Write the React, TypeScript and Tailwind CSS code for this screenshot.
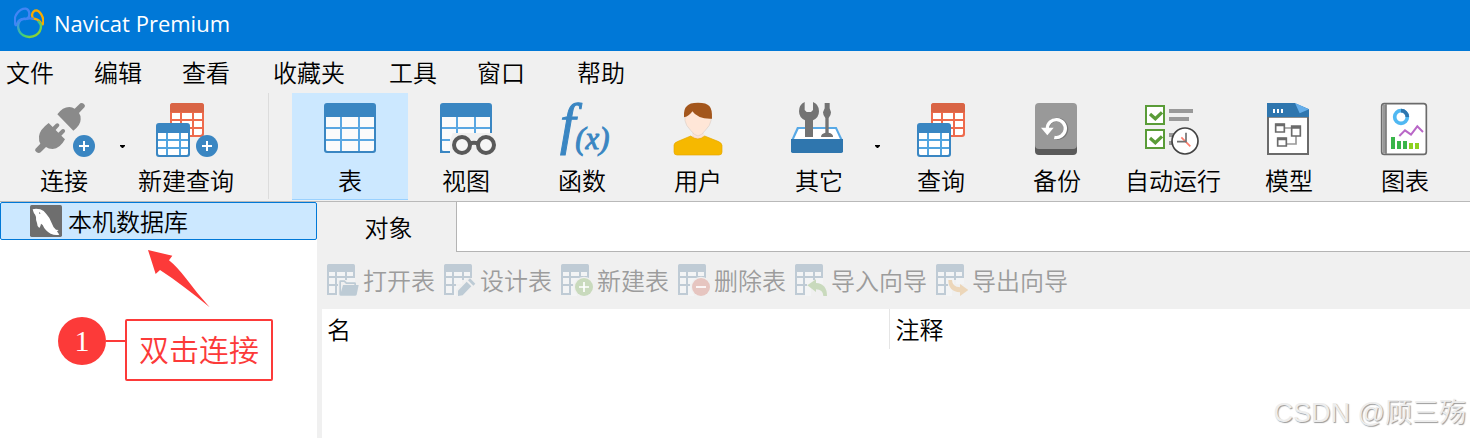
import React from 'react'

const Plus: React.FC<{ x: number; y: number }> = ({ x, y }) => (
  <g>
    <circle cx={x} cy={y} r="33" fill="#3a86c2" />
    <path d={`M${x - 15} ${y}h30M${x} ${y - 15}v30`} stroke="#fff" strokeWidth="6" />
  </g>
)

const TwoTables: React.FC = () => (
  <g>
    <rect x="510" y="39" width="102" height="102" rx="9" fill="#ee6b4d" />
    <path d="M510 67V48q0-9 9-9h84q9 0 9 9v19z" fill="#d96445" />
    <path
      d="M516 69h24v18h-24zM546 69h30v18h-30zM582 69h24v18h-24zM516 93h24v18h-24zM546 93h30v18h-30zM582 93h24v18h-24zM546 117h30v18h-30zM582 117h24v13q0 5-5 5h-19z"
      fill="#fff"
    />
    <rect x="468" y="99" width="102" height="102" rx="9" fill="#3a86c2" />
    <path d="M474 129h90v66h-90z" fill="#52a5e0" />
    <path
      d="M474 129h24v18h-24zM504 129h33v18h-33zM543 129h21v18h-21zM474 153h24v18h-24zM504 153h33v18h-33zM543 153h21v18h-21zM474 177h24v18h-19q-5 0-5-5zM504 177h33v18h-33zM543 177h21v13q0 5-5 5h-16z"
      fill="#fff"
    />
  </g>
)

const connectIcon = (
  <g>
    <g fill="#8a8a8a">
      <path d="M172 73Q188 51 208 51Q217 51 224 56L241 40Q246 37 251 41Q257 45 254 51L237 69Q243 77 242 88Q242 106 220 122z" />
      <path d="M146 99L158 111L168 101Q172 98 176 101Q180 105 177 109L167 120L175 128L186 118Q191 116 194 119Q197 123 194 127L184 137L195 148Q180 176 158 177Q145 177 138 171L122 187Q117 191 110 187Q103 183 106 177L121 161Q116 154 117 139Q119 119 146 99z" />
    </g>
    <circle cx="252" cy="168" r="38" fill="#f0f0f0" />
    <Plus x={252} y={168} />
  </g>
)

const newQueryIcon = (
  <g>
    <TwoTables />
    <Plus x={621} y={168} />
  </g>
)

const tableIcon = (
  <g>
    <rect x="162" y="39" width="156" height="150" rx="9" fill="#3a86c2" />
    <path d="M168 81h144v102h-144z" fill="#5aa7e2" />
    <path
      d="M168 81h42v30h-42zM216 81h48v30h-48zM270 81h42v30h-42zM168 117h42v30h-42zM216 117h48v30h-48zM270 117h42v30h-42zM168 153h42v30h-37q-5 0-5-5zM216 153h48v30h-48zM270 153h42v25q0 5-5 5h-37z"
      fill="#fbfbfb"
    />
  </g>
)

const viewIcon = (
  <g>
    <path d="M510 189V48q0-9 9-9h138q9 0 9 9v81H540v60z" fill="#3a86c2" />
    <path d="M516 81h144v48H540v54h-24z" fill="#5aa7e2" />
    <path
      d="M516 81h42v30h-42zM564 81h48v30h-48zM618 81h42v30h-42zM516 117h42v30h-42zM564 117h48v20h-48zM618 117h42v20h-42zM516 153h30v30h-25q-5 0-5-5z"
      fill="#fbfbfb"
    />
    <path d="M540 189v-36l8-24h118v60z" fill="#f0f0f0" />
    <g fill="#f6f6f6" stroke="#595959" strokeWidth="12">
      <circle cx="576" cy="165" r="24" />
      <circle cx="648" cy="165" r="24" />
      <path d="M599 160q13-4 26 0" />
    </g>
  </g>
)

const functionIcon = (
  <g
    fill="#3a86c2"
    stroke="#3a86c2"
    strokeWidth="3"
    className="font-['Liberation_Serif',serif] italic"
  >
    <text x="60" y="159" fontSize="168">f</text>
    <text x="106" y="177" fontSize="92">(x)</text>
  </g>
)

const userIcon = (
  <g>
    <path d="M458 128h32v14l-16 14-16-14z" fill="#f8d5c2" />
    <path
      d="M402 165Q403 158 414 154L452 138Q474 156 494 138L534 154Q545 158 546 166V186Q546 195 537 195H411Q402 195 402 186z"
      fill="#f6b800"
      stroke="#e6a800"
      strokeWidth="2"
    />
    <path d="M456 136Q474 151 492 136L488 132H460z" fill="#fbe3d7" />
    <path d="M435 78V92Q437 106 452 121Q464 137 474 138Q484 137 496 121Q511 106 513 92V78L475 50z" fill="#ffe6d7" stroke="#d9d0ca" strokeWidth="2" />
    <path d="M432 82Q430 57 441 48Q448 38 474 38Q500 38 508 48Q517 57 516 86Q474 88 457 64Q449 78 432 82z" fill="#a3561c" />
  </g>
)

const toolsIcon = (
  <g>
    <path d="M51 111H170L187 147H35z" fill="#58a9e6" />
    <path d="M56 117H166L180 147H42z" fill="#fff" />
    <path d="M75 141V91Q57 83 57 64Q57 44 74 36V60L80 66H93L99 60V36Q117 43 117 64Q117 83 99 91V141z" fill="#737373" />
    <path d="M134 39h15v16l4 12q0 9-7 17v44q13 3 13 11v2h-36q0-10 13-13V84q-7-8-7-17l5-12z" fill="#737373" />
    <path d="M33 147H189V184Q189 189 184 189H38Q33 189 33 184z" fill="#2f76ae" />
  </g>
)

const backupIcon = (
  <g>
    <path d="M75 165h126v18q0 12-12 12H87q-12 0-12-12z" fill="#5a5a5a" />
    <rect x="75" y="39" width="126" height="138" rx="12" fill="#999" />
    <path d="M114 120A28 28 0 1 1 136 144" fill="none" stroke="#777" strokeWidth="10" />
    <path d="M112 116A27 27 0 1 1 133 142" fill="none" stroke="#fff" strokeWidth="10" />
    <path d="M93 113h38l-19 23z" fill="#fff" />
  </g>
)

const automationIcon = (
  <g>
    <g fill="#fff" stroke="#5a9c38" strokeWidth="6">
      <rect x="408" y="48" width="54" height="54" />
      <rect x="408" y="120" width="54" height="54" />
      <path d="M420 72l16 14 20-19M420 144l16 14 20-19" fill="none" strokeWidth="10" />
    </g>
    <path d="M477 57h72v12h-72zM477 81h60v12h-60zM477 129h24v12h-24zM477 153h12v12h-12z" fill="#999" />
    <circle cx="525" cy="153" r="39" fill="#fff" stroke="#434343" strokeWidth="5" />
    <path d="M514 142l27 27" stroke="#ff7d6b" strokeWidth="5" />
    <path d="M501 155h27V128" fill="none" stroke="#707070" strokeWidth="5" />
  </g>
)

const modelIcon = (
  <g>
    <path d="M84 80h120v112H84z" fill="#fff" stroke="#6b6b6b" strokeWidth="6" />
    <path d="M81 39h84l42 18v24H81z" fill="#2f76ae" />
    <path d="M165 39l42 18V39z" fill="#f0f0f0" />
    <path d="M165 39l42 19-28 12z" fill="#65aeea" />
    <path d="M99 57h6v12h-6zM111 57h6v12h-6zM123 57h6v12h-6z" fill="#fff" />
    <path d="M133 114h21M168 138v24h-30" fill="none" stroke="#999" strokeWidth="5" />
    <g fill="#fff" stroke="#6b6b6b" strokeWidth="5">
      <path d="M107 102h26v24h-26zM155 108h26v30h-26zM113 144h26v24h-26z" />
      <path d="M107 105h26M155 112h26M113 147h26" strokeWidth="8" />
    </g>
  </g>
)

const chartIcon = (
  <g>
    <rect x="425" y="41" width="134" height="152" rx="8" fill="#fff" stroke="#6b6b6b" strokeWidth="5" />
    <path d="M428 44h12v146h-12z" fill="#999" />
    <path d="M438 42v150" stroke="#6b6b6b" strokeWidth="3" />
    <circle cx="483" cy="81" r="19" fill="none" stroke="#50b8f2" strokeWidth="11" />
    <path d="M483 62a19 19 0 0 1 19 19" fill="none" stroke="#2f76ae" strokeWidth="11" />
    <path d="M478 138l17-17 18 13 19-25 17 17" fill="none" stroke="#b967c7" strokeWidth="6" />
    <path d="M453 141h12v36h-12zM471 153h12v24h-12zM489 153h12v24h-12z" fill="#39b54a" />
    <path d="M507 159h12v18h-12zM525 159h12v18h-12z" fill="#8cd11f" />
  </g>
)

type Tool = { name: string; left: number; art: React.ReactNode; menu?: boolean }

const connectionTools: Tool[] = [
  { name: '连接', left: 96, art: connectIcon, menu: true },
  { name: '新建查询', left: 462, art: newQueryIcon },
]

const objectTools: Tool[] = [
  { name: '表', left: 144, art: tableIcon },
  { name: '视图', left: 492, art: viewIcon },
  { name: '函数', left: 30, art: functionIcon },
  { name: '用户', left: 378, art: userIcon },
  { name: '其它', left: 21, art: toolsIcon, menu: true },
  { name: '查询', left: 444, art: <TwoTables /> },
  { name: '备份', left: 45, art: backupIcon },
  { name: '自动运行', left: 393, art: automationIcon },
  { name: '模型', left: 51, art: modelIcon },
  { name: '图表', left: 399, art: chartIcon },
]

const ToolButton: React.FC<{ tool: Tool; active?: boolean }> = ({ tool, active }) => (
  <div className="flex shrink-0">
    <button
      className={`flex h-[107px] w-[116px] flex-col items-center pt-[9px] ${
        active ? 'bg-[#cce8ff] shadow-[inset_0_-1px_#99d1ff]' : ''
      } ${tool.menu ? 'pl-[10px]' : ''}`}
    >
      <svg className="h-14 w-16 shrink-0 overflow-visible" viewBox={`${tool.left} 36 192 168`}>
        {tool.art}
      </svg>
      <span className="mt-1 leading-9 whitespace-nowrap">{tool.name}</span>
    </button>
    {tool.menu && (
      <button aria-label={`${tool.name}菜单`} className="flex w-[11px] justify-center pt-[52px]">
        <svg className="h-[3px] w-[5px]" viewBox="0 0 5 3">
          <path d="M0 0h5v1L3 3H2L0 1z" />
        </svg>
      </button>
    )}
  </div>
)

const menus = [
  { name: '文件', width: 'w-[88px]' },
  { name: '编辑', width: 'w-[88px]' },
  { name: '查看', width: 'w-[91px]' },
  { name: '收藏夹', width: 'w-[116px]' },
  { name: '工具', width: 'w-[88px]' },
  { name: '窗口', width: 'w-[100px]' },
  { name: '帮助', width: 'w-[88px]' },
]

const tableActions = [
  {
    name: '打开表',
    art: (
      <g>
        <path d="M33 96V48h22l6 6h28v12h7v30z" fill="#f0f0f0" />
        <path d="M37 53q0-4 4-4h12l6 6h24q4 0 4 4v4h-5v-3H57l-6-6h-9v30l6-21h47l-6 29q-1 3-5 3H41q-4 0-4-4z" fill="#bdcbd5" />
      </g>
    ),
  },
  {
    name: '设计表',
    art: (
      <g>
        <path d="M36 96V78l36-36h12v42z" fill="#f0f0f0" />
        <path d="M42 80l26-27 14 14-26 27-14 2zM72 49l6-6 16 16-6 6z" fill="#bdcbd5" />
      </g>
    ),
  },
  {
    name: '新建表',
    art: (
      <g>
        <circle cx="69" cy="69" r="31" fill="#f0f0f0" />
        <circle cx="69" cy="69" r="27" fill="#c9dabd" />
        <path d="M54 69h30M69 54v30" stroke="#fff" strokeWidth="5" />
      </g>
    ),
  },
  {
    name: '删除表',
    art: (
      <g>
        <circle cx="69" cy="69" r="31" fill="#f0f0f0" />
        <circle cx="69" cy="69" r="27" fill="#e6c5c0" />
        <path d="M54 69h30" stroke="#fff" strokeWidth="5" />
      </g>
    ),
  },
  {
    name: '导入向导',
    art: <path d="M37 64l26-18v11q33 2 33 39H85q-1-20-22-20v8z" fill="#c9dabd" />,
  },
  {
    name: '导出向导',
    art: <path d="M37 48h11q1 21 24 22V60l25 18-25 18V85q-35-2-35-37z" fill="#ecd6b9" />,
  },
]

const App: React.FC = () => {
  return (
    <div className="relative flex min-h-screen w-full flex-col overflow-hidden bg-white font-['Noto_Sans_CJK_SC',sans-serif] text-2xl font-[350] text-black">
      <header className="flex h-[51px] items-center bg-[#0078d7] pl-3.5">
        <svg className="mb-1.5 h-8 w-[30px]" viewBox="42 18 90 96" fill="none" strokeWidth="7" strokeLinecap="round">
          <defs>
            <linearGradient id="ring" x1="0" y1="0" x2="1" y2="1">
              <stop offset="0" stopColor="#3f8cf3" />
              <stop offset="0.55" stopColor="#3fd07a" />
              <stop offset="1" stopColor="#b9d40a" />
            </linearGradient>
          </defs>
          <path d="M46 70Q41 48 52 36Q63 22 77 23Q88 26 88 39Q88 54 76 54Q58 52 53 65Q48 77 46 70z" stroke="#4285f4" />
          <path d="M98 52L96 42Q98 28 110 28Q122 32 128 49Q132 64 128 70Q124 70 120 62Q113 54 98 52z" stroke="#f9ab00" />
          <path d="M59 60Q50 74 58 91Q66 107 88 108Q111 106 119 91Q128 74 116 62" stroke="url(#ring)" />
          <path d="M59 60Q69 51 78 54Q87 51 98 53" stroke="#4285f4" />
        </svg>
        <h1 className="mb-1 ml-2.5 font-['Open_Sans',sans-serif] text-[22px] font-normal text-white">
          Navicat Premium
        </h1>
      </header>

      <nav className="flex h-[42px] items-center bg-[#f0f0f0] pl-1.5">
        {menus.map((item) => (
          <button key={item.name} className={`${item.width} shrink-0 text-left leading-9`}>
            {item.name}
          </button>
        ))}
      </nav>

      <div className="flex h-[109px] border-b border-[#b9b9b9] bg-[#f0f0f0] pl-px">
        {connectionTools.map((tool) => (
          <ToolButton key={tool.name} tool={tool} />
        ))}
        <div className="mr-[23px] ml-6 h-[106px] w-px shrink-0 bg-[#dcdcdc]" />
        {objectTools.map((tool) => (
          <ToolButton key={tool.name} tool={tool} active={tool.name === '表'} />
        ))}
      </div>

      <main className="flex flex-1">
        <aside className="relative w-[317px] shrink-0">
          <button className="flex h-[38px] w-full items-center rounded-xs border border-[#0078d7] bg-[#cce8ff] pl-[29px]">
            <svg className="h-8 w-8" viewBox="90 30 96 96">
              <rect x="90" y="30" width="96" height="96" rx="5" fill="#6e6e6e" />
              <path
                d="M98 43Q107 39 121 43Q132 47 139 57Q151 70 155 84Q159 97 168 104L176 105L171 109L178 119Q165 122 152 116Q135 107 128 90L123 86Q122 94 118 99Q111 94 111 84Q107 74 108 66Q106 58 102 55Q99 48 98 43z"
                fill="#fff"
              />
              <path d="M117 51l5 4-4 2z" fill="#6e6e6e" />
            </svg>
            <span className="ml-1.5 leading-9">本机数据库</span>
          </button>

          <svg className="absolute top-12 left-[148px] h-[58px] w-[62px]" viewBox="444 165 186 174">
            <path d="M444 165L517 182L507 196Q530 214 560 253Q590 294 629 337Q590 304 548 273Q514 247 480 225L467 237z" fill="#fc3a39" />
          </svg>
          <div className="absolute top-[117px] left-[58px] flex items-start text-[#fc3a39]">
            <div className="-mt-0.5 flex size-12 items-center justify-center rounded-full bg-[#fc3a39] font-['Liberation_Serif',serif] text-[30px] font-normal text-white">
              1
            </div>
            <div className="mt-[21px] h-0.5 w-[19px] bg-[#fc3a39]" />
            <div className="rounded-xs border-2 border-[#fc3a39] px-3 pt-1.5 pb-2.5 text-[30px] leading-[42px] whitespace-nowrap">
              双击连接
            </div>
          </div>
        </aside>

        <section className="flex min-w-0 flex-1 flex-col bg-[#f0f0f0]">
          <div className="flex h-[50px]">
            <button className="w-[139px] shrink-0 pl-1 leading-9">对象</button>
            <div className="flex-1 border-b border-l border-[#b4b4b4] bg-white" />
          </div>

          <div className="flex h-[57px] items-center gap-[9px] pb-0.5 pl-2.5 text-[#9c9c9c]">
            {tableActions.map((action) => (
              <button key={action.name} disabled className="flex shrink-0 items-center gap-1">
                <svg className="h-8 w-8" viewBox="0 0 96 96">
                  <path d="M0 93V5q0-5 5-5h74q5 0 5 5v43H36v45z" fill="#bfcbd5" />
                  <path
                    d="M6 24h18v12H6zM30 24h24v12H30zM60 24h18v12H60zM6 42h18v18H6zM30 42h24v18H30zM60 42h24v18H60zM6 66h18v21H6zM30 66h18v30H30z"
                    fill="#f3f4f5"
                  />
                  {action.art}
                </svg>
                <span className="leading-9">{action.name}</span>
              </button>
            ))}
          </div>

          <div className="ml-[5px] flex-1 bg-white">
            <table className="w-full table-fixed border-collapse text-left">
              <thead>
                <tr className="h-10">
                  <th className="w-[567px] border-r border-[#e5e5e5] p-0 pl-[5px] font-[350]">名</th>
                  <th className="p-0 pl-1.5 font-[350]">注释</th>
                </tr>
              </thead>
            </table>
          </div>
        </section>
      </main>

      <div className="absolute right-1 bottom-1.5 font-['Liberation_Sans','Noto_Sans_CJK_SC',sans-serif] text-[27px] text-[#ededed] [text-shadow:1px_1px_1px_#999]">
        CSDN @顾三殇
      </div>
    </div>
  )
}

export default App
